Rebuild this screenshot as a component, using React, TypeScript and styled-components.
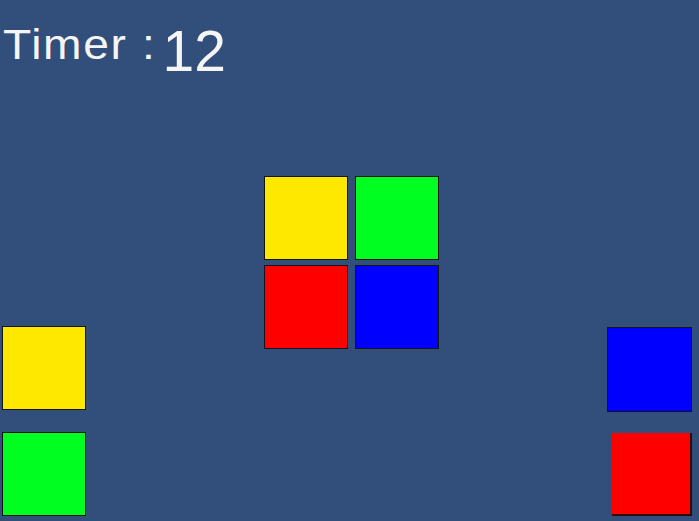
import React from "react";
import styled, { createGlobalStyle } from "styled-components";

const Global = createGlobalStyle`
  html, body { margin: 0; padding: 0; background: #324e7a; }
  body { font-family: "Liberation Sans", Arial, sans-serif; }
`;

const Page = styled.div`
  width: 699px;
  height: 521px;
  overflow: hidden;
  background: #324e7a;
  display: flex;
  flex-direction: column;
`;

const Header = styled.div`
  height: 90px;
  box-sizing: border-box;
  padding: 24px 0 0 3px;
  display: flex;
  align-items: flex-start;
  color: #f5f5f5;
`;

const Label = styled.span`
  font-size: 42px;
  line-height: 42px;
  letter-spacing: 1.5px;
  display: inline-block;
  transform: scaleX(1.1);
  transform-origin: left top;
  margin-right: 20px;
  white-space: pre;
`;

const Count = styled.span`
  font-size: 57px;
  line-height: 57px;
  margin-top: -1px;
`;

const Board = styled.div`
  flex: 1;
  display: grid;
  grid-template-columns: 84px 1fr 85px;
  padding: 0 7px 5px 2px;
`;

const Side = styled.div<{ $gap: number }>`
  align-self: end;
  display: flex;
  flex-direction: column;
  align-items: flex-end;
  gap: ${(p) => p.$gap}px;
`;

const Center = styled.div`
  justify-self: center;
  margin-top: 86px;
  margin-left: 9px;
  display: grid;
  grid-template-columns: 84px 84px;
  column-gap: 7px;
  row-gap: 5px;
  align-self: start;
`;

const Tile = styled.div<{ $color: string; $w?: number; $h?: number; $shadow?: boolean }>`
  width: ${(p) => p.$w ?? 84}px;
  height: ${(p) => p.$h ?? 84}px;
  box-sizing: border-box;
  background: ${(p) => p.$color};
  border: ${(p) => (p.$shadow ? "none" : "1.5px solid #151515")};
  ${(p) =>
    p.$shadow
      ? `border-right: 2px solid #2a0a0a; border-bottom: 2px solid #2a0a0a;`
      : ""}
`;

const YELLOW = "#ffe800";
const GREEN = "#00ff20";
const RED = "#ff0000";
const BLUE = "#0000ff";

export default function App() {
  return (
    <>
      <Global />
      <Page>
        <Header>
          <Label>Timer :</Label>
          <Count>12</Count>
        </Header>
        <Board>
          <Side $gap={22}>
            <Tile $color={YELLOW} />
            <Tile $color={GREEN} />
          </Side>
          <Center>
            <Tile $color={YELLOW} />
            <Tile $color={GREEN} />
            <Tile $color={RED} />
            <Tile $color={BLUE} />
          </Center>
          <Side $gap={21}>
            <Tile $color={BLUE} $w={85} $h={85} />
            <Tile $color={RED} $w={80} $h={83} $shadow />
          </Side>
        </Board>
      </Page>
    </>
  );
}
